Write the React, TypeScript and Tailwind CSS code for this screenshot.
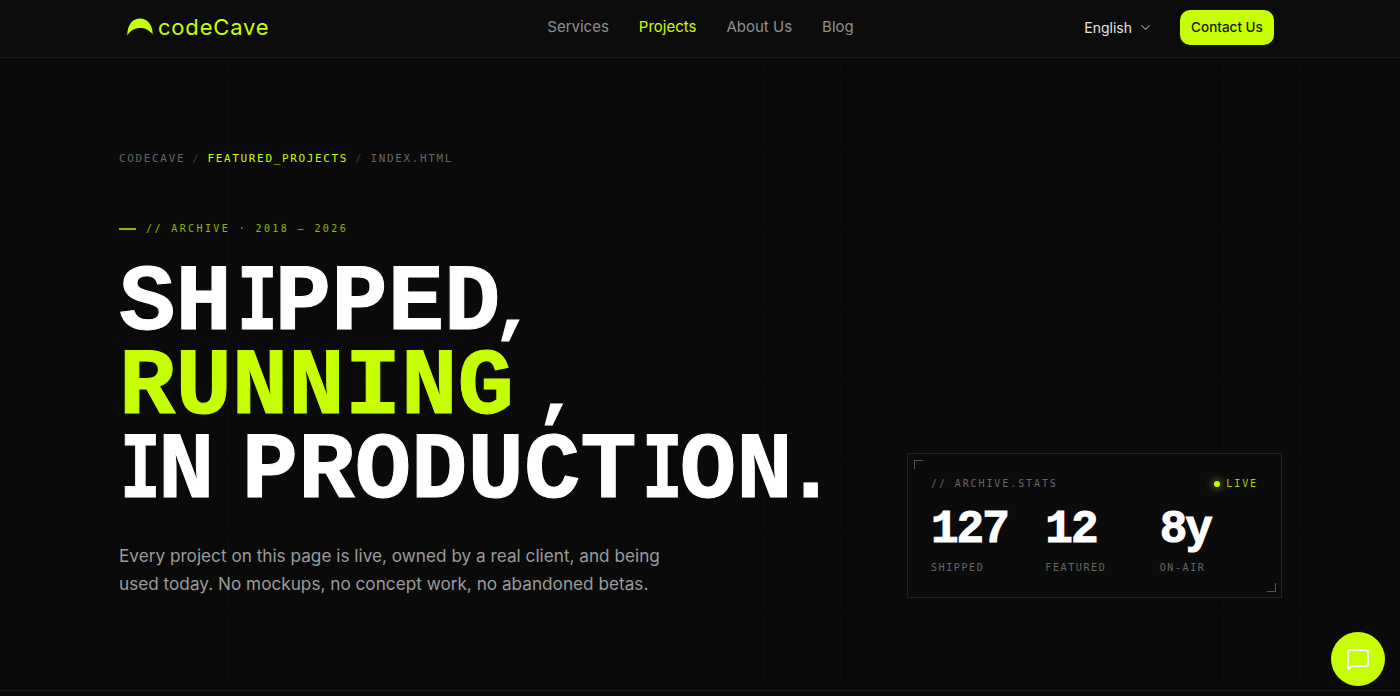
import { ChevronDown, MessageSquare } from "lucide-react";

const navLinks = ["Services", "Projects", "About Us", "Blog"];

const stats = [
  { value: "127", label: "SHIPPED" },
  { value: "12", label: "FEATURED" },
  { value: "8y", label: "ON-AIR" },
];

const Logo = () => (
  <div className="mb-[2px] flex items-center gap-[5px]">
    <svg width="26" height="18" viewBox="0 0 26 18" className="text-[#c6ff00]">
      <path
        d="M0.3 17.5C0.2 7 5.5 0.5 13 0.5C20.5 0.5 25.8 7 25.7 16.5C22 11.8 18 10 13 10C8 10 4 12 0.3 17.5Z"
        fill="currentColor"
      />
    </svg>
    <span className="font-['Inter',sans-serif] text-[22px] leading-none tracking-[0.8px] text-[#c6ff00]">
      codeCave
    </span>
  </div>
);

const Header = () => (
  <header className="grid h-[58px] grid-cols-[1fr_auto_1fr] items-center border-b border-[#1c1c1c] bg-[#0c0c0d] pb-[2px] pl-[127px] pr-[126px]">
    <Logo />
    <nav className="flex items-center gap-[30px] font-['Inter',sans-serif] text-[15px]">
      {navLinks.map((link) => (
        <a
          key={link}
          className={link === "Projects" ? "text-[#c6ff00]" : "text-[#8f8f8f]"}
        >
          {link}
        </a>
      ))}
    </nav>
    <div className="flex items-center justify-end gap-[27px] font-['Inter',sans-serif]">
      <div className="flex items-center gap-[6px] text-[14px] text-[#e4e4e4]">
        English
        <ChevronDown size={15} className="text-[#8a8a8a]" />
      </div>
      <button className="h-[35px] w-[94px] rounded-[10px] bg-[#c6ff00] text-[13.5px] font-medium text-[#17190c]">
        Contact Us
      </button>
    </div>
  </header>
);

const StatsCard = () => (
  <div className="relative h-[145px] w-[375px] border border-[#232323] bg-[#0b0b0c] px-[23px] pt-[23px]">
    <span className="absolute left-[6px] top-[6px] h-[9px] w-[9px] border-l border-t border-[#555]" />
    <span className="absolute bottom-[5px] right-[5px] h-[9px] w-[9px] border-b border-r border-[#555]" />
    <div className="flex items-center justify-between font-['DejaVu_Sans_Mono',monospace] text-[10px] leading-[14px] tracking-[0.19em]">
      <span className="text-[#666]">// ARCHIVE.STATS</span>
      <span className="flex items-center gap-[6px] text-[#a8d400]">
        <span className="h-[6px] w-[6px] rounded-full bg-[#c6ff00] shadow-[0_0_8px_#c6ff00]" />
        LIVE
      </span>
    </div>
    <div className="mt-[16px] grid grid-cols-3 gap-4">
      {stats.map((stat) => (
        <div key={stat.label}>
          <div className="font-['Liberation_Mono',monospace] text-[46px] font-bold leading-[46px] tracking-[-2px] text-white [-webkit-text-stroke:1px_currentColor]">
            {stat.value}
          </div>
          <div className="mt-[8px] font-['DejaVu_Sans_Mono',monospace] text-[10px] leading-[14px] tracking-[0.16em] text-[#666]">
            {stat.label}
          </div>
        </div>
      ))}
    </div>
  </div>
);

// the mono I is too wide for this headline, so it gets squeezed
const SlimI = ({ className = "" }: { className?: string }) => (
  <span className={`inline-block w-[38px] origin-left scale-x-[0.72] ${className}`}>
    I
  </span>
);

const Hero = () => (
  <section className="flex items-end justify-between pl-[119px] pr-[118px] pt-[94px]">
    <div>
      <div className="flex gap-[7px] font-['DejaVu_Sans_Mono',monospace] text-[11px] leading-[14px] tracking-[0.15em] text-[#666]">
        <span>CODECAVE</span>
        <span className="text-[#3c3c3c]">/</span>
        <span className="text-[#c6ff00]">FEATURED_PROJECTS</span>
        <span className="text-[#3c3c3c]">/</span>
        <span>INDEX.HTML</span>
      </div>
      <div className="mt-[56px] flex items-center gap-[10px] font-['DejaVu_Sans_Mono',monospace] text-[10px] leading-[14px] tracking-[0.24em] text-[#8fb800]">
        <span className="h-[2px] w-[17px] bg-[#8fb800]" />
        <span>// ARCHIVE · 2018 — 2026</span>
      </div>
      <h1 className="mt-[26px] whitespace-nowrap font-['Liberation_Mono',monospace] text-[94px] font-bold leading-[84px] text-white [-webkit-text-stroke:1px_currentColor]">
        <div>
          SH
          <SlimI className="ml-[5px]" />
          PPED
          <span className="ml-[-5px] text-[60px] leading-[0] [-webkit-text-stroke:3px_currentColor]">,</span>
        </div>
        <div>
          <span className="text-[#c6ff00]">RUNNING</span>
          <span className="ml-[25px] text-[60px] leading-[0] [-webkit-text-stroke:3px_currentColor]">,</span>
        </div>
        <div>
          <SlimI className="ml-[1px]" />N
          <span className="tracking-[-29px]"> </span>PRODUCT
          <SlimI className="ml-[5px]" />
          ON
          <span className="ml-[-10px]">.</span>
        </div>
      </h1>
      <p className="mt-[28px] font-['Inter',sans-serif] text-[17.2px] leading-[28px] text-[#9b9b9b]">
        Every project on this page is live, owned by a real client, and being
        <br />
        used today. No mockups, no concept work, no abandoned betas.
      </p>
    </div>
    <StatsCard />
  </section>
);

export default function App() {
  return (
    <div className="relative h-[696px] overflow-hidden bg-[#0a0a0b] bg-[linear-gradient(to_right,#0e0e0f_1px,transparent_1px),linear-gradient(to_bottom,#0e0e0f_1px,transparent_1px)] bg-[size:76.6px_76.6px] bg-[position:-2.5px_-2.5px]">
      <Header />
      <Hero />
      <div className="absolute bottom-[5px] left-0 h-px w-full bg-[#1c1c1c]" />
      <button className="absolute bottom-[10px] right-[15px] flex h-[54px] w-[54px] items-center justify-center rounded-full bg-[#c6ff00] text-white">
        <MessageSquare size={24} strokeWidth={2} />
      </button>
    </div>
  );
}
